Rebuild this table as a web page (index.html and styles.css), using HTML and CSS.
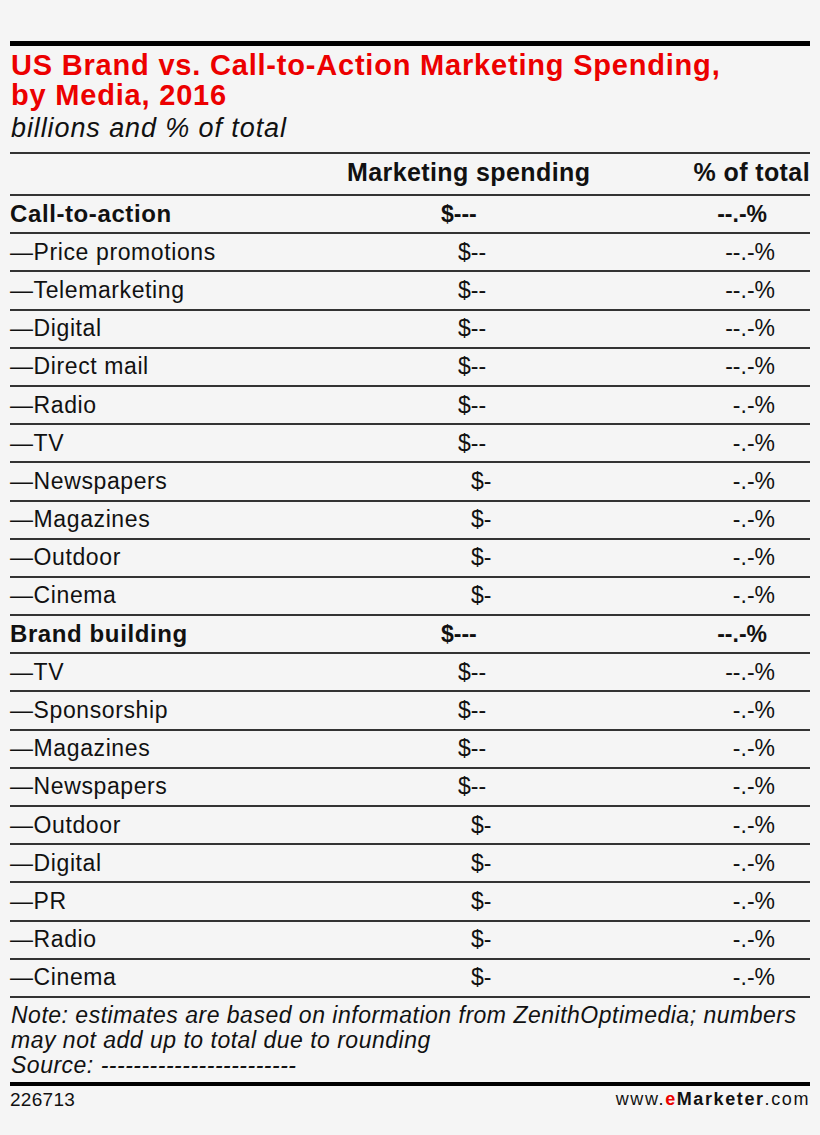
FILE: index.html
```html
<!DOCTYPE html>
<html>
<head>
<meta charset="utf-8">
<link rel="stylesheet" href="styles.css">
</head>
<body>
<div class="page">
  <div class="rule-top"></div>
  <h1 class="title">US Brand vs. Call-to-Action Marketing Spending,<br>by Media, 2016</h1>
  <div class="subtitle">billions and % of total</div>
  <div class="table">
    <div class="row head">
      <div class="lab"></div>
      <div class="val hv">Marketing spending</div>
      <div class="pct hp">% of total</div>
    </div>
    <div class="row bold"><div class="lab">Call-to-action</div><div class="val v3">$---</div><div class="pct pb">--.-%</div></div>
    <div class="row"><div class="lab">—Price promotions</div><div class="val v2">$--</div><div class="pct">--.-%</div></div>
    <div class="row"><div class="lab">—Telemarketing</div><div class="val v2">$--</div><div class="pct">--.-%</div></div>
    <div class="row"><div class="lab">—Digital</div><div class="val v2">$--</div><div class="pct">--.-%</div></div>
    <div class="row"><div class="lab">—Direct mail</div><div class="val v2">$--</div><div class="pct">--.-%</div></div>
    <div class="row"><div class="lab">—Radio</div><div class="val v2">$--</div><div class="pct">-.-%</div></div>
    <div class="row"><div class="lab">—TV</div><div class="val v2">$--</div><div class="pct">-.-%</div></div>
    <div class="row"><div class="lab">—Newspapers</div><div class="val v1">$-</div><div class="pct">-.-%</div></div>
    <div class="row"><div class="lab">—Magazines</div><div class="val v1">$-</div><div class="pct">-.-%</div></div>
    <div class="row"><div class="lab">—Outdoor</div><div class="val v1">$-</div><div class="pct">-.-%</div></div>
    <div class="row"><div class="lab">—Cinema</div><div class="val v1">$-</div><div class="pct">-.-%</div></div>
    <div class="row bold"><div class="lab">Brand building</div><div class="val v3">$---</div><div class="pct pb">--.-%</div></div>
    <div class="row"><div class="lab">—TV</div><div class="val v2">$--</div><div class="pct">--.-%</div></div>
    <div class="row"><div class="lab">—Sponsorship</div><div class="val v2">$--</div><div class="pct">-.-%</div></div>
    <div class="row"><div class="lab">—Magazines</div><div class="val v2">$--</div><div class="pct">-.-%</div></div>
    <div class="row"><div class="lab">—Newspapers</div><div class="val v2">$--</div><div class="pct">-.-%</div></div>
    <div class="row"><div class="lab">—Outdoor</div><div class="val v1">$-</div><div class="pct">-.-%</div></div>
    <div class="row"><div class="lab">—Digital</div><div class="val v1">$-</div><div class="pct">-.-%</div></div>
    <div class="row"><div class="lab">—PR</div><div class="val v1">$-</div><div class="pct">-.-%</div></div>
    <div class="row"><div class="lab">—Radio</div><div class="val v1">$-</div><div class="pct">-.-%</div></div>
    <div class="row"><div class="lab">—Cinema</div><div class="val v1">$-</div><div class="pct">-.-%</div></div>
  </div>
  <div class="note">Note: estimates are based on information from ZenithOptimedia; numbers<br>may not add up to total due to rounding<br>Source: ------------------------</div>
  <div class="footer">
    <span class="id">226713</span>
    <span class="site">www.<span class="e">e</span><b>Marketer</b>.com</span>
  </div>
</div>
</body>
</html>
```
FILE: styles.css
```css
html, body {
  margin: 0;
  padding: 0;
  background: #f5f5f5;
}
body {
  font-family: "Liberation Sans", Arial, sans-serif;
  color: #111;
}
.page {
  padding: 41px 10px 0 10px;
}
.rule-top {
  height: 5px;
  background: #000;
}
.title {
  margin: 4px 0 0 1px;
  font-size: 29px;
  line-height: 30px;
  font-weight: bold;
  color: #ec0000;
  letter-spacing: 0.8px;
}
.subtitle {
  font-style: italic;
  font-size: 27px;
  line-height: 30px;
  letter-spacing: 0.9px;
  margin: 3px 0 0 1px;
  color: #111;
}
.table {
  margin-top: 9px;
  border-top: 2px solid #333;
}
.row {
  display: flex;
  align-items: center;
  height: 36.2px;
  border-bottom: 2px solid #333;
  font-size: 23px;
}
.row .lab {
  letter-spacing: 0.6px;
}
.row.head {
  height: 36px;
  padding-top: 4px;
  align-items: flex-start;
  font-weight: bold;
  font-size: 25px;
  letter-spacing: 0.4px;
  white-space: nowrap;
}
.row.bold {
  font-weight: bold;
}
.row.bold .lab {
  font-size: 24px;
}
.lab {
  flex: 1;
}
.val {
  width: 240px;
  box-sizing: border-box;
}
.pct {
  width: 230px;
  text-align: right;
  padding-right: 35px;
  box-sizing: border-box;
}
.hv { padding-left: 7px; }
.hp { padding-right: 0; }
.v3 { padding-left: 101px; }
.v2 { padding-left: 118px; }
.v1 { padding-left: 131px; }
.pb { padding-right: 43px; }
.note {
  font-style: italic;
  font-size: 23px;
  line-height: 25px;
  letter-spacing: 0.5px;
  padding: 5px 0 4px 1px;
}
.footer {
  border-top: 4px solid #000;
  display: flex;
  justify-content: space-between;
  align-items: flex-start;
  padding-top: 3px;
}
.id {
  font-size: 19px;
  letter-spacing: 0.3px;
}
.site {
  font-size: 18px;
  letter-spacing: 1.6px;
}
.e {
  color: #ec0000;
  font-weight: bold;
}
```
